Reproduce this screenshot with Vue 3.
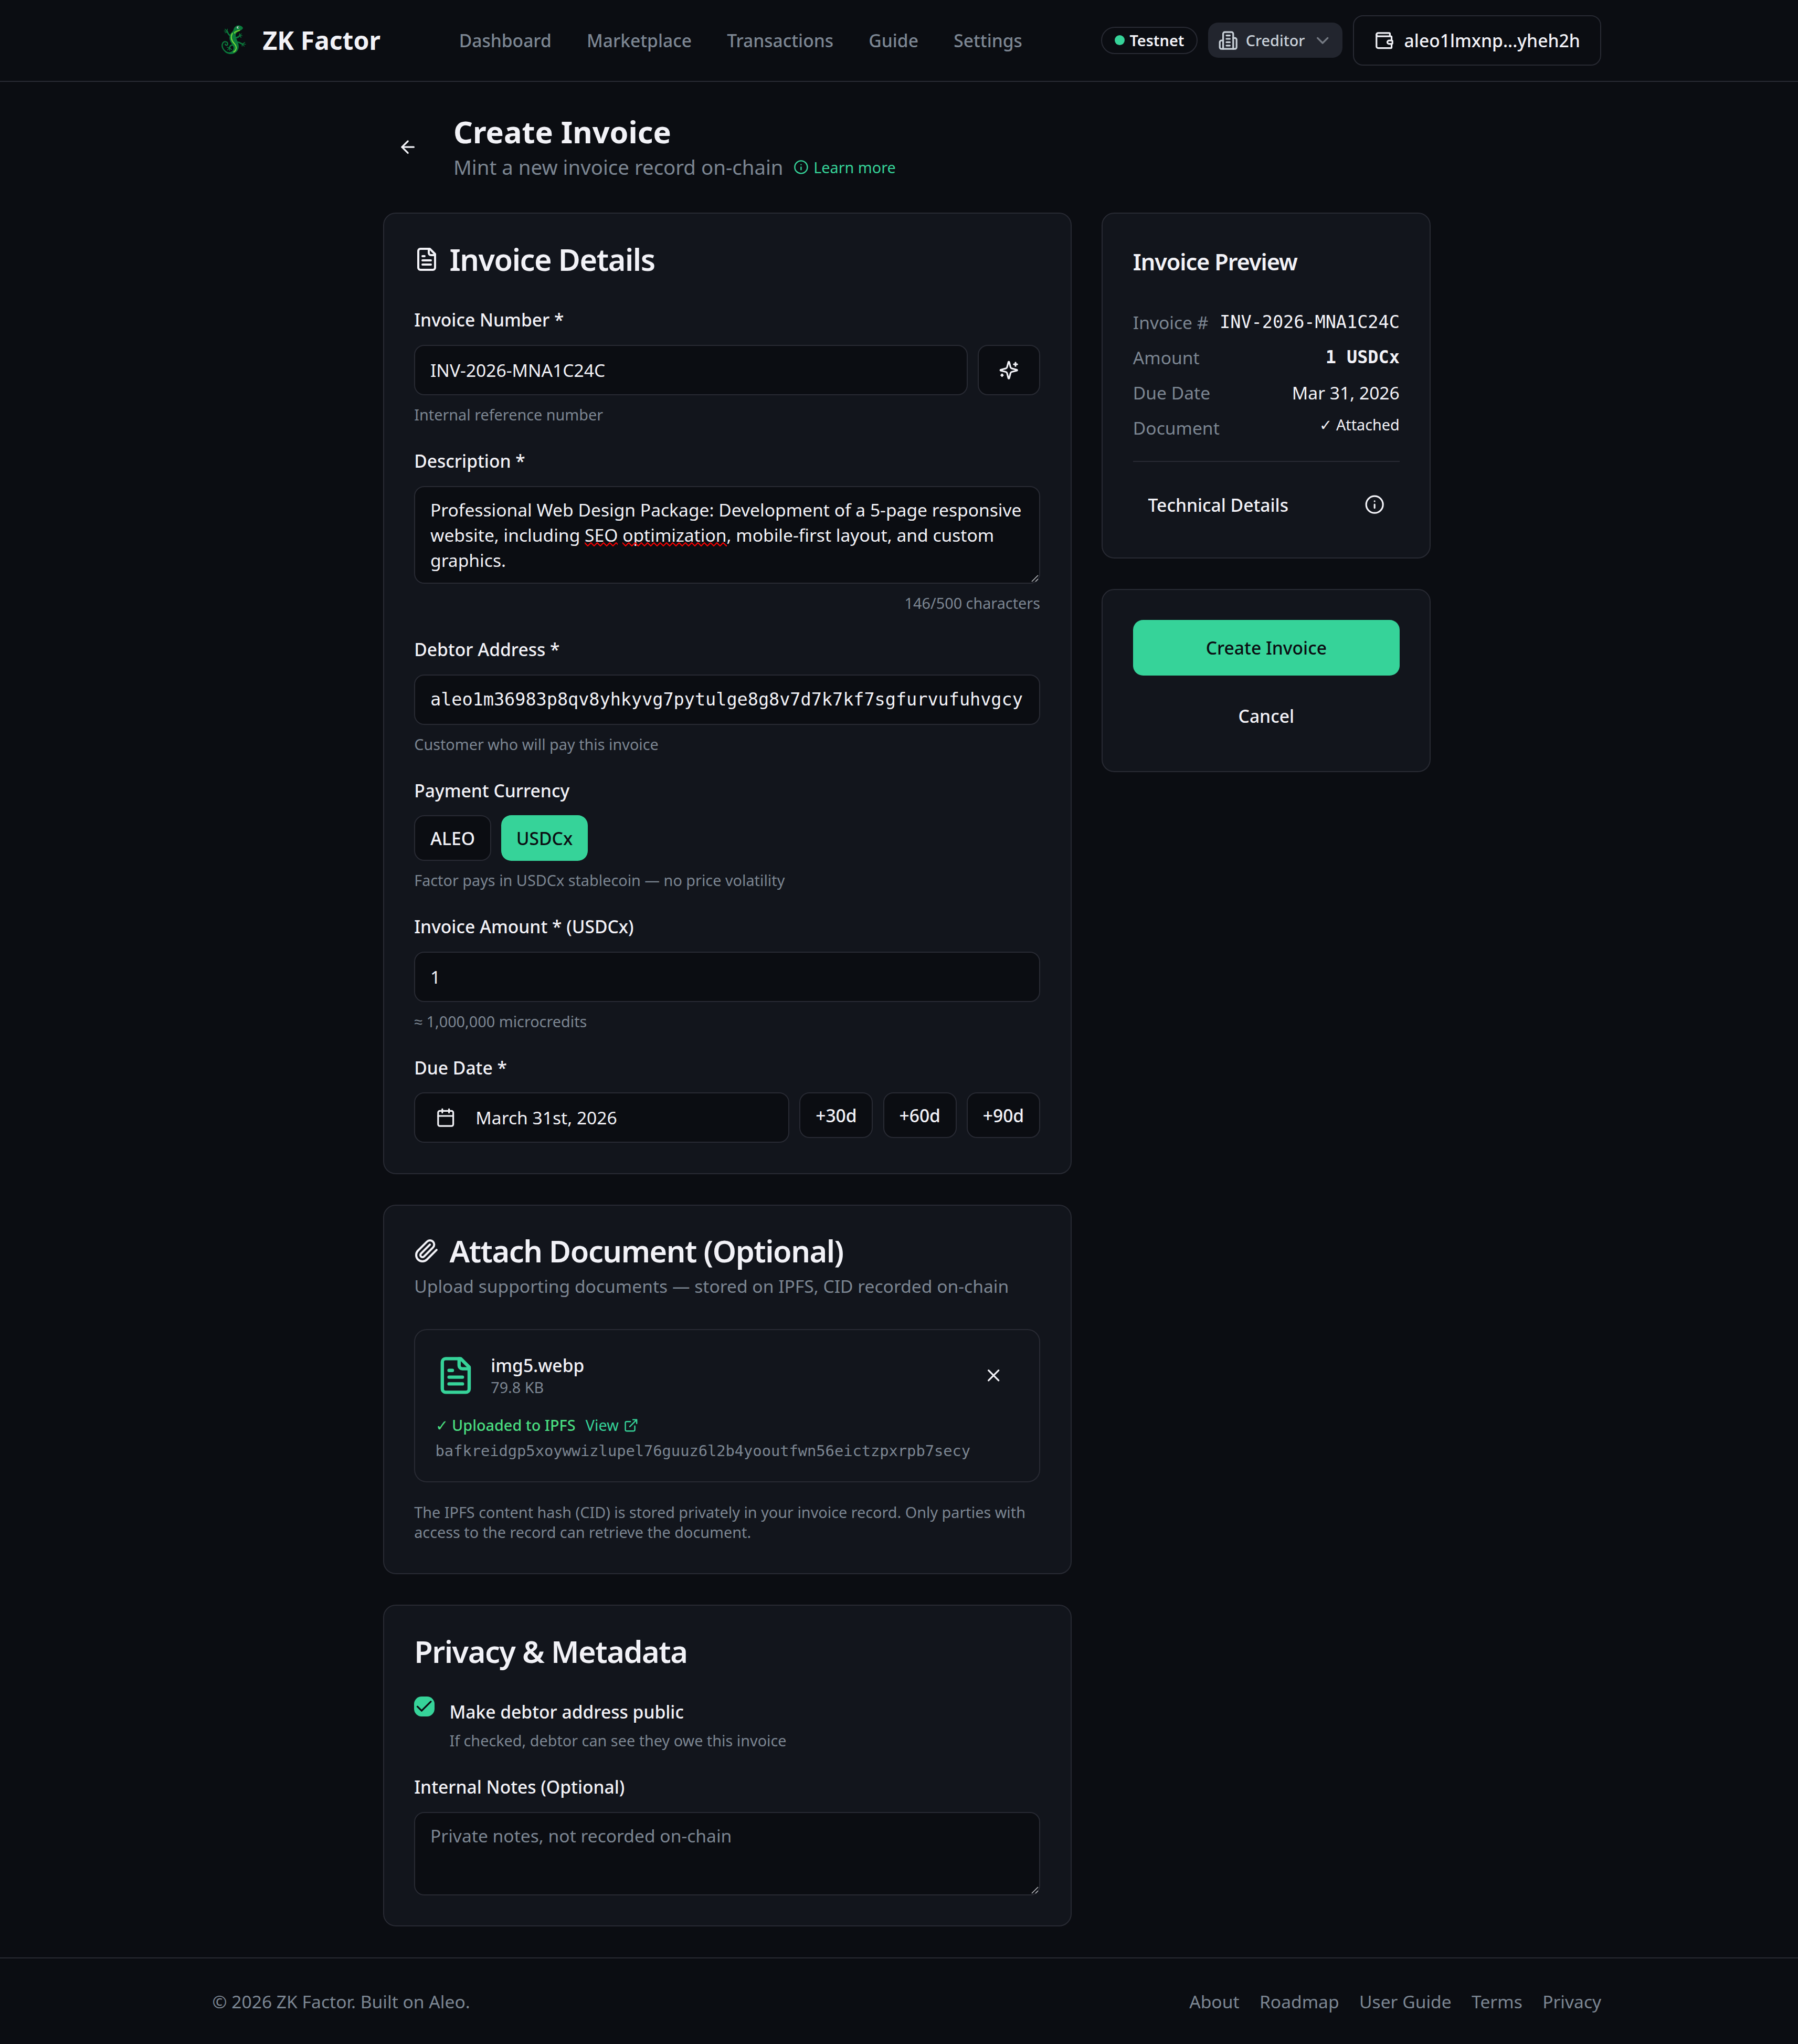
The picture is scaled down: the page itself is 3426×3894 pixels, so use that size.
<script setup>
const navLinks = ['Dashboard', 'Marketplace', 'Transactions', 'Guide', 'Settings']
const footerLinks = ['About', 'Roadmap', 'User Guide', 'Terms', 'Privacy']
const quickDates = ['+30d', '+60d', '+90d']
</script>

<template>
  <div class="page">
    <header class="header">
      <div class="container header-row">
        <div class="brand">
          <svg class="logo" viewBox="3.2 8.6 76.8 76.8" fill="none" stroke-linecap="round" stroke-linejoin="round">
            <g stroke="#0b7a3c" stroke-width="2.6">
              <path d="M40 38 C36 39 33 36 31.500 31" />
              <path d="M47 42 C51 43 53 41 55 38.500" />
              <path d="M50 51 C54 50 56 53 60 54.500" />
              <path d="M44 57 C39 55 36 58 35.500 62" />
            </g>
            <g stroke="#0b7a3c" stroke-width="1.4">
              <path d="M31.500 31 L25.500 29.500 M31 30 L27 26 M31 30 L31.500 26 M31.500 32 L27 33" />
              <path d="M55 38.500 L54.500 34.500 M55 38.500 L58 35 M55 38.500 L59.500 38.500 M55 38.500 L57.500 42" />
              <path d="M60 54.500 L64.500 51.500 M60 54.500 L66 55 M60 54.500 L63.500 58.500 M60 54.500 L59.500 58.500" />
              <path d="M35.500 62 L31 60.500 M35.500 62 L32 65.500 M35.500 62 L36 67 M35.500 62 L39.500 65" />
            </g>
            <path stroke="#0b7a3c" stroke-width="2.300" d="M34 71.500 C24 69 19.500 59 22.500 53 C25 48.500 32 49.500 32 54 C32 57.500 27.500 57.500 27.500 54.800" />
            <path fill="#0b7a3c" d="M43 28 C44 22 49 18.500 54 19 C58 19.500 61 22 61.200 24 C60 27.500 55 29 51.500 31 C47.500 33.500 46.500 37 48 42 C49.500 47.500 53.500 53 53 60 C52.500 68 46 73.500 38 73.500 C32 73.500 28 71 26 68.500 C31 71 37 71 41 67.500 C46 63 42 57 38.500 52 C34.500 46 34 37 40.500 31.500 Z" />
            <path stroke="#6bd12f" stroke-width="2.300" d="M54.500 28.500 C47 30.500 43.500 33 45.500 33.500" />
            <path stroke="#7be036" stroke-width="1.900" d="M41 34 C36.500 42 40 49 45 54 C50 60 49 66 43.500 69.500" />
            <circle cx="51.500" cy="23" r="2.200" fill="#cfe6d8" />
            <circle cx="52.300" cy="23.200" r="1" fill="#123524" />
          </svg>
          <span class="brand-name">ZK Factor</span>
        </div>
        <nav class="nav">
          <a v-for="l in navLinks" :key="l">{{ l }}</a>
        </nav>
        <div class="header-right">
          <span class="badge"><i class="dot"></i>Testnet</span>
          <span class="role">
            <svg class="i16" viewBox="0 0 24 24"><path d="M6 22V4a2 2 0 0 1 2-2h8a2 2 0 0 1 2 2v18Z" /><path d="M6 12H4a2 2 0 0 0-2 2v6a2 2 0 0 0 2 2h2" /><path d="M18 9h2a2 2 0 0 1 2 2v9a2 2 0 0 1-2 2h-2" /><path d="M10 6h4M10 10h4M10 14h4M10 18h4" /></svg>
            <span>Creditor</span>
            <svg class="i16 chev" viewBox="0 0 24 24"><path d="m6 9 6 6 6-6" /></svg>
          </span>
          <button class="btn outline wallet">
            <svg class="i16" viewBox="0 0 24 24"><path d="M19 7V4a1 1 0 0 0-1-1H5a2 2 0 0 0 0 4h15a1 1 0 0 1 1 1v4h-3a2 2 0 0 0 0 4h3a1 1 0 0 0 1-1v-2a1 1 0 0 0-1-1" /><path d="M3 5v14a2 2 0 0 0 2 2h15a1 1 0 0 0 1-1v-4" /></svg>
            aleo1lmxnp...yheh2h
          </button>
        </div>
      </div>
    </header>

    <main class="main">
      <div class="title-row">
        <button class="btn back">
          <svg class="i16" viewBox="0 0 24 24"><path d="m12 19-7-7 7-7" /><path d="M19 12H5" /></svg>
        </button>
        <div>
          <h1>Create Invoice</h1>
          <p class="subtitle">
            Mint a new invoice record on-chain
            <a class="learn">
              <svg class="i12" viewBox="0 0 24 24"><circle cx="12" cy="12" r="10" /><path d="M12 16v-4M12 8h.01" /></svg>Learn more
            </a>
          </p>
        </div>
      </div>

      <div class="grid">
        <div class="col-main">
          <section class="card">
            <h2>
              <svg class="i20" viewBox="0 0 24 24"><path d="M15 2H6a2 2 0 0 0-2 2v16a2 2 0 0 0 2 2h12a2 2 0 0 0 2-2V7Z" /><path d="M14 2v4a2 2 0 0 0 2 2h4" /><path d="M10 9H8M16 13H8M16 17H8" /></svg>
              Invoice Details
            </h2>
            <div class="fields">
              <div class="field">
                <div class="label"><label>Invoice Number *</label></div>
                <div class="row">
                  <div class="input grow">INV-2026-MNA1C24C</div>
                  <button class="btn outline">
                    <svg class="i16" viewBox="0 0 24 24"><path d="M9.937 15.500A2 2 0 0 0 8.500 14.063l-6.135-1.582a.5.5 0 0 1 0-.962L8.500 9.936A2 2 0 0 0 9.937 8.500l1.582-6.135a.5.5 0 0 1 .963 0L14.063 8.500A2 2 0 0 0 15.500 9.937l6.135 1.581a.5.5 0 0 1 0 .964L15.500 14.063a2 2 0 0 0-1.437 1.437l-1.582 6.135a.5.5 0 0 1-.963 0z" /><path d="M20 3v4M22 5h-4M4 17v2M5 18H3" /></svg>
                  </button>
                </div>
                <p class="hint">Internal reference number</p>
              </div>

              <div class="field">
                <div class="label"><label>Description *</label></div>
                <div class="textarea rows-3">
                  Professional Web Design Package: Development of a 5-page responsive website, including <span class="misspelled">SEO<svg class="squiggle"><use href="#zigzag" /></svg></span> <span class="misspelled">optimization<svg class="squiggle"><use href="#zigzag" /></svg></span>, mobile-first layout, and custom graphics.
                  <svg class="grip" viewBox="0 0 14 14"><path d="M1 13 L13 1 M8 13 L13 8" /></svg>
                </div>
                <p class="hint right">146/500 characters</p>
              </div>

              <div class="field">
                <div class="label"><label>Debtor Address *</label></div>
                <div class="input mono">aleo1m36983p8qv8yhkyvg7pytulge8g8v7d7k7kf7sgfurvufuhvgcy</div>
                <p class="hint">Customer who will pay this invoice</p>
              </div>

              <div class="field">
                <div class="label"><label>Payment Currency</label></div>
                <div class="row">
                  <button class="btn sm outline">ALEO</button>
                  <button class="btn sm primary">USDCx</button>
                </div>
                <p class="hint">Factor pays in USDCx stablecoin — no price volatility</p>
              </div>

              <div class="field">
                <div class="label"><label>Invoice Amount * (USDCx)</label></div>
                <div class="input">1</div>
                <p class="hint">≈ 1,000,000 microcredits</p>
              </div>

              <div class="field">
                <div class="label"><label>Due Date *</label></div>
                <div class="row">
                  <button class="btn outline grow date">
                    <svg class="i16" viewBox="0 0 24 24"><path d="M8 2v4M16 2v4" /><rect width="18" height="18" x="3" y="4" rx="2" /><path d="M3 10h18" /></svg>
                    March 31st, 2026
                  </button>
                  <button v-for="d in quickDates" :key="d" class="btn sm outline">{{ d }}</button>
                </div>
              </div>
            </div>
          </section>

          <section class="card">
            <h2>
              <svg class="i20" viewBox="0 0 24 24"><path d="m21.440 11.050-9.190 9.190a6 6 0 0 1-8.490-8.490l8.570-8.570A4 4 0 1 1 18 8.840l-8.590 8.570a2 2 0 0 1-2.830-2.830l8.490-8.480" /></svg>
              Attach Document (Optional)
            </h2>
            <p class="card-desc">Upload supporting documents — stored on IPFS, CID recorded on-chain</p>
            <div class="file-box">
              <div class="file-row">
                <svg class="i32" viewBox="0 0 24 24"><path d="M15 2H6a2 2 0 0 0-2 2v16a2 2 0 0 0 2 2h12a2 2 0 0 0 2-2V7Z" /><path d="M14 2v4a2 2 0 0 0 2 2h4" /><path d="M10 9H8M16 13H8M16 17H8" /></svg>
                <div class="grow">
                  <p class="file-name">img5.webp</p>
                  <p class="hint">79.8 KB</p>
                </div>
                <button class="btn back">
                  <svg class="i16" viewBox="0 0 24 24"><path d="M18 6 6 18M6 6l12 12" /></svg>
                </button>
              </div>
              <div class="ipfs-row">
                <span class="uploaded">✓ Uploaded to IPFS</span>
                <a class="view">View<svg class="i12" viewBox="0 0 24 24"><path d="M15 3h6v6M10 14 21 3" /><path d="M18 13v6a2 2 0 0 1-2 2H5a2 2 0 0 1-2-2V8a2 2 0 0 1 2-2h6" /></svg></a>
              </div>
              <p class="hint mono cid">bafkreidgp5xoywwizlupel76guuz6l2b4yooutfwn56eictzpxrpb7secy</p>
            </div>
            <p class="hint note">The IPFS content hash (CID) is stored privately in your invoice record. Only parties with access to the record can retrieve the document.</p>
          </section>

          <section class="card">
            <h2>Privacy &amp; Metadata</h2>
            <div class="fields">
              <div class="check-row">
                <span class="checkbox"><svg class="i16" viewBox="0 0 24 24"><path d="M20 6 9 17l-5-5" /></svg></span>
                <div>
                  <div class="label"><label>Make debtor address public</label></div>
                  <p class="hint check-hint">If checked, debtor can see they owe this invoice</p>
                </div>
              </div>
              <div class="field">
                <div class="label"><label>Internal Notes (Optional)</label></div>
                <div class="textarea notes">
                  Private notes, not recorded on-chain
                  <svg class="grip" viewBox="0 0 14 14"><path d="M1 13 L13 1 M8 13 L13 8" /></svg>
                </div>
              </div>
            </div>
          </section>
        </div>

        <aside class="col-side">
          <section class="card">
            <h3>Invoice Preview</h3>
            <dl class="preview">
              <div><dt>Invoice #</dt><dd class="mono">INV-2026-MNA1C24C</dd></div>
              <div><dt>Amount</dt><dd class="mono strong">1 USDCx</dd></div>
              <div><dt>Due Date</dt><dd>Mar 31, 2026</dd></div>
              <div><dt>Document</dt><dd class="small">✓ Attached</dd></div>
            </dl>
            <div class="separator"></div>
            <button class="btn sm tech">
              Technical Details
              <svg class="i16" viewBox="0 0 24 24"><circle cx="12" cy="12" r="10" /><path d="M12 16v-4M12 8h.01" /></svg>
            </button>
          </section>
          <section class="card actions">
            <button class="btn lg primary">Create Invoice</button>
            <button class="btn">Cancel</button>
          </section>
        </aside>
      </div>
    </main>

    <footer class="footer">
      <div class="container footer-row">
        <p>© 2026 ZK Factor. Built on Aleo.</p>
        <div class="footer-links"><a v-for="l in footerLinks" :key="l">{{ l }}</a></div>
      </div>
    </footer>

    <svg class="defs">
      <defs>
        <pattern id="zig" width="12" height="8" patternUnits="userSpaceOnUse">
          <path d="M-1 0 L0 1 L6 7 L12 1 L13 0" fill="none" stroke="#f00" stroke-width="2" />
        </pattern>
        <rect id="zigzag" width="400" height="8" fill="url(#zig)" />
      </defs>
    </svg>
  </div>
</template>

<style>
html { font-size: 38.4px; background: #0b0d12; }
body { overflow-x: hidden; }
</style>

<style scoped>
* { box-sizing: border-box; margin: 0; padding: 0; }
.page {
  min-height: 3894px;
  background: #0b0d12;
  color: #f2f2f7;
  font-family: "Noto Sans", sans-serif;
  font-size: 1rem;
  line-height: 1.5rem;
  display: flex;
  flex-direction: column;
}
svg { flex: none; display: block; }
.i12, .i16, .i20, .i32 { fill: none; stroke: currentColor; stroke-width: 2; stroke-linecap: round; stroke-linejoin: round; }
.i12 { width: .75rem; height: .75rem; }
.i16 { width: 1rem; height: 1rem; }
.i20 { width: 1.25rem; height: 1.25rem; }
.i32 { width: 2rem; height: 2rem; color: #36d399; }
.defs { position: absolute; width: 0; height: 0; }
.grow { flex: 1; min-width: 0; }
.mono { font-family: "DejaVu Sans Mono", monospace; letter-spacing: -.002em; }

.container { width: 2646.6px; margin-left: 404.6px; }
.header { border-bottom: 2px solid #282a33; }
.header-row { height: 4rem; display: flex; align-items: center; justify-content: space-between; }
.brand { display: flex; align-items: center; gap: .5rem; }
.logo { width: 2rem; height: 2rem; }
.brand-name { font-size: 1.25rem; font-weight: 700; line-height: 1.75rem; }
.nav { display: flex; gap: .25rem; margin-top: 2px; font-size: .875rem; font-weight: 500; color: #7c8692; }
.nav a { padding: 0 .75rem; }
.header-right { display: flex; align-items: center; gap: .5rem; }
.badge {
  display: flex; align-items: center; gap: .25rem;
  padding: .125rem .625rem; border: 2px solid #282a33; border-radius: 99px;
  font-size: .75rem; line-height: 1rem; font-weight: 600;
}
.dot { width: .5rem; height: .5rem; border-radius: 50%; background: #36d399; }
.role {
  display: flex; align-items: center; gap: .375rem; height: 1.75rem; padding: 0 .5rem;
  border-radius: .5rem; background: #22252e; color: #c9d1d9;
  font-size: .75rem; font-weight: 500;
}
.chev { opacity: .5; }

.btn {
  display: flex; align-items: center; justify-content: center; gap: .5rem; flex: none;
  height: 2.5rem; padding: 0 1rem; border: 0; border-radius: .5rem; background: none;
  color: #f2f2f7; font-family: inherit; font-size: .875rem; font-weight: 500; line-height: 1.25rem;
  white-space: nowrap;
}
.btn.outline { border: 2px solid #282a33; background: #0b0d12; }
.btn.sm { height: 2.25rem; padding: 0 .75rem; }
.btn.lg { height: 2.75rem; }
.btn.primary { background: #36d399; color: #0b0d12; }
.btn.back { width: 2.5rem; padding: 0; }
.btn.grow { flex: 1; }
.btn.date { justify-content: flex-start; gap: 1rem; font-weight: 400; }
.btn.tech { width: 100%; justify-content: space-between; }

.main { width: 52rem; margin-left: 19rem; padding: 1.5rem 0 0; flex: 1; }
.title-row { display: flex; align-items: center; gap: 1rem; margin-bottom: 1.5rem; }
h1 { font-size: 1.5rem; line-height: 2rem; font-weight: 700; }
.subtitle { color: #7c8692; display: flex; align-items: center; gap: .5rem; }
.learn { display: flex; align-items: center; gap: .25rem; font-size: .75rem; line-height: 1rem; color: #36d399; }

.grid { display: flex; gap: 1.5rem; align-items: flex-start; }
.col-main { width: 1312px; display: flex; flex-direction: column; gap: 1.5rem; }
.col-side { flex: 1; display: flex; flex-direction: column; gap: 1.5rem; }
.card { border: 2px solid #282a33; border-radius: .625rem; background: #12151c; padding: 1.5rem; }
h2 {
  display: flex; align-items: center; gap: .5rem;
  font-size: 1.5rem; line-height: 1.5rem; font-weight: 600; letter-spacing: -.025em;
}
h3 { font-size: 1.125rem; line-height: 1.75rem; font-weight: 600; letter-spacing: -.025em; }
.card-desc { margin-top: .375rem; font-size: .875rem; line-height: 1.25rem; color: #7c8692; }
.fields { margin-top: 1.5rem; display: flex; flex-direction: column; gap: 1rem; }
.field { display: flex; flex-direction: column; gap: .5rem; }
.label { height: 1.5rem; margin-top: -1px; margin-bottom: 1px; }
label { font-size: .875rem; line-height: 1; font-weight: 500; }
.row { display: flex; gap: .5rem; align-items: flex-start; }
.input, .textarea {
  border: 2px solid #282a33; border-radius: .5rem; background: #0b0d12;
  padding: .5rem .75rem; font-size: .875rem; line-height: 1.25rem;
}
.input { height: 2.5rem; display: flex; align-items: center; white-space: nowrap; overflow: hidden; }
.textarea { position: relative; }
.rows-3 { height: 186.4px; }
.notes { height: 159px; color: #7c8692; }
.grip { position: absolute; right: 1px; bottom: 1px; width: 14px; height: 14px; stroke: #b9bbc0; stroke-width: 1.6; }
.misspelled { position: relative; }
.squiggle { position: absolute; left: 0; bottom: 1px; width: 100%; height: 8px; overflow: hidden; }
.hint { margin-top: -1px; margin-bottom: 1px; font-size: .75rem; line-height: 1rem; color: #7c8692; }
.right { text-align: right; }

.file-box { margin-top: 1.5rem; border: 2px solid #282a33; border-radius: .625rem; padding: 1rem; }
.file-row { display: flex; align-items: center; gap: .75rem; }
.file-name { font-size: .875rem; line-height: 1.25rem; font-weight: 500; }
.ipfs-row { display: flex; gap: .5rem; margin: calc(.75rem - 1px) 0 1px; font-size: .75rem; line-height: 1rem; }
.uploaded { color: #4ade80; font-weight: 500; }
.view { display: flex; align-items: center; gap: .25rem; color: #36d399; }
.cid { margin: calc(.25rem + 1px) 0 0; }
.note { margin-top: 1rem; }

.check-row { display: flex; gap: .75rem; align-items: flex-start; }
.checkbox { width: 1rem; height: 1rem; border-radius: .375rem; background: #36d399; color: #0b0d12; }
.check-hint { margin-top: calc(.25rem - 1px); }

.preview { margin-top: 1.5rem; display: flex; flex-direction: column; gap: .5rem; font-size: .875rem; line-height: 1.25rem; }
.preview div { display: flex; justify-content: space-between; }
.preview dt { color: #7c8692; }
.strong { font-weight: 700; }
.small { margin-top: -1px; font-size: .75rem; line-height: 1rem; }
.separator { height: 2px; background: #282a33; margin: 1rem 0 calc(1rem + .4px); }
.actions { display: flex; flex-direction: column; gap: .75rem; }

.footer { border-top: 2px solid #282a33; padding: calc(1.5rem + 1px) 0 calc(1.5rem - 1px); color: #7c8692; font-size: .875rem; line-height: 1.25rem; }
.footer-row { display: flex; justify-content: space-between; }
.footer-links { display: flex; gap: 1rem; }
</style>
